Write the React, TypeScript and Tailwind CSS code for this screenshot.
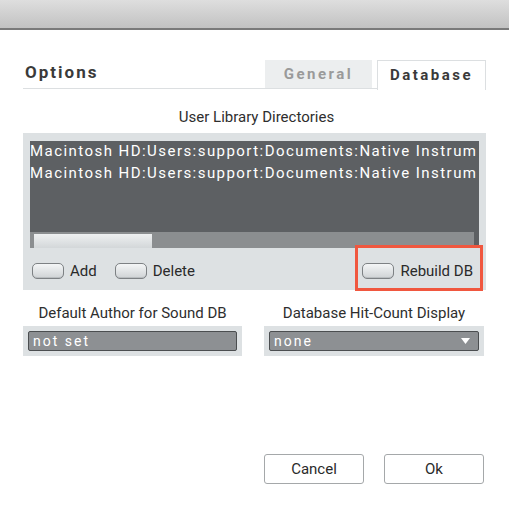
import React from 'react';

const font = { fontFamily: 'Roboto, "Liberation Sans", sans-serif' };

const Pill: React.FC = () => (
  <span className="inline-block w-[32px] h-[16px] rounded-[5px] border border-[#7d8184] bg-gradient-to-b from-[#f4f6f7] to-[#cfd3d5] shadow-[inset_0_-1px_0_#b9bdc0]" />
);

const SmallButton: React.FC<{ label: string }> = ({ label }) => (
  <div className="flex items-center gap-[6px]">
    <Pill />
    <span className="text-[15px] text-[#2a2a2a] leading-none">{label}</span>
  </div>
);

export default function App() {
  // list is narrower than the paths, so they show cut off
  const dirs = [
    'Macintosh HD:Users:support:Documents:Native Instrum',
    'Macintosh HD:Users:support:Documents:Native Instrum',
  ];

  return (
    <div className="w-[509px] h-[509px] bg-white overflow-hidden" style={font}>
      <div className="h-[30px] bg-gradient-to-b from-[#dedede] to-[#c2c2c2] border-b-2 border-[#7a7a7a]" />

      <div className="px-[23px]">
        {/* title + tabs */}
        <div className="mt-[31px] flex items-end border-b border-[#dcdfe1] h-[28px]">
          <div className="flex-1 pl-[2px] pb-[7px] text-[17px] font-bold tracking-[2px] text-[#3a3a3a] leading-none">
            Options
          </div>
          <div className="w-[107px] h-[28px] bg-[#eceeef] flex items-center justify-center text-[15px] font-bold tracking-[2.5px] text-[#9a9a9a]">
            General
          </div>
          <div className="ml-[5px] w-[109px] h-[30px] -mb-[2px] bg-white border border-b-0 border-[#dcdfe1] flex items-center justify-center text-[15px] font-bold tracking-[2.5px] text-[#3a3a3a]">
            Database
          </div>
        </div>

        <div className="mt-[21px] text-center text-[15px] text-[#2e2e2e] leading-none pl-[4px]">
          User Library Directories
        </div>

        {/* list panel */}
        <div className="relative mt-[8px] h-[157px] bg-[#dde1e3] pt-[8px] px-[7px]">
          <div className="h-[107px] bg-[#5d6063] flex flex-col overflow-hidden">
            <div className="pt-[2px] flex flex-col gap-[5px]">
              {dirs.map((d, i) => (
                <div key={i} className="whitespace-nowrap text-[15px] tracking-[1.45px] text-white leading-[17px]">
                  {d}
                </div>
              ))}
            </div>
            <div className="mt-auto h-[16px] bg-[#8b8e90] pl-[4px] pt-[2px] mr-[5px]">
              <div className="w-[118px] h-[14px] bg-gradient-to-b from-[#eef0f1] to-[#d3d7d9]" />
            </div>
          </div>
          <div className="flex items-center mt-[15px] pl-[2px]">
            <SmallButton label="Add" />
            <div className="ml-[18px]">
              <SmallButton label="Delete" />
            </div>
            <div className="ml-auto mr-[6px]">
              <SmallButton label="Rebuild DB" />
            </div>
          </div>
          <div className="absolute left-[332px] top-[112px] w-[128px] h-[46px] border-[3px] border-[#f0573f]" />
        </div>

        {/* fields */}
        <div className="mt-[16px] flex gap-[22px]">
          <div className="w-[219px]">
            <div className="text-center text-[15px] text-[#2e2e2e] leading-none">Default Author for Sound DB</div>
            <div className="mt-[5px] h-[30px] bg-[#dde1e3] p-[5px]">
              <div className="h-[20px] bg-[#8d9093] border border-[#4b4e50] rounded-[2px] px-[4px] flex items-center text-[14px] tracking-[2px] text-white">
                not set
              </div>
            </div>
          </div>
          <div className="w-[220px]">
            <div className="text-center text-[15px] text-[#2e2e2e] leading-none">Database Hit-Count Display</div>
            <div className="mt-[5px] h-[30px] bg-[#dde1e3] p-[5px]">
              <div className="h-[20px] bg-[#8d9093] border border-[#4b4e50] rounded-[2px] px-[4px] flex items-center text-[14px] tracking-[2px] text-white">
                <span className="flex-1">none</span>
                <svg width="9" height="6" viewBox="0 0 9 6" className="mr-[4px]">
                  <path d="M0 0 H9 L4.5 6 Z" fill="#ffffff" />
                </svg>
              </div>
            </div>
          </div>
        </div>

        {/* bottom buttons */}
        <div className="mt-[98px] flex justify-end gap-[20px] pr-[2px]">
          <button className="w-[100px] h-[30px] border border-[#a5a8aa] rounded-[3px] bg-white text-[15px] text-[#2a2a2a]">
            Cancel
          </button>
          <button className="w-[100px] h-[30px] border border-[#a5a8aa] rounded-[3px] bg-white text-[15px] text-[#2a2a2a]">
            Ok
          </button>
        </div>
      </div>
    </div>
  );
}
